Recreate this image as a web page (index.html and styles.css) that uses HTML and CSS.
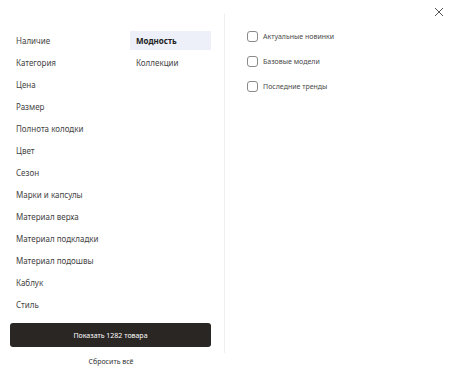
FILE: index.html
```html
<!DOCTYPE html>
<html lang="ru">

<head>
  <meta charset="UTF-8" />
  <meta name="viewport" content="width=device-width, initial-scale=1.0" />
  <title>Фильтры</title>
  <link rel="stylesheet" href="styles.css">
</head>

<body>
  <div class="filters">
    <!-- Close -->
    <button class="close" aria-label="Закрыть">
      <svg width="10" height="10" viewBox="0 0 10 10">
        <path d="M1 1L9 9M9 1L1 9" stroke="#555" stroke-width="1" fill="none" />
      </svg>
    </button>

    <div class="filters-body">
      <!-- Left: groups + subgroups -->
      <div class="filters-left">
        <div class="columns">
          <ul class="group-list">
            <li>Наличие</li>
            <li>Категория</li>
            <li>Цена</li>
            <li>Размер</li>
            <li>Полнота колодки</li>
            <li>Цвет</li>
            <li>Сезон</li>
            <li>Марки и капсулы</li>
            <li>Материал верха</li>
            <li>Материал подкладки</li>
            <li>Материал подошвы</li>
            <li>Каблук</li>
            <li>Стиль</li>
          </ul>
          <ul class="group-list sub">
            <li class="active">Модность</li>
            <li>Коллекции</li>
          </ul>
        </div>
        <button class="show-btn">Показать 1282 товара</button>
      </div>

      <!-- Right: options -->
      <div class="filters-right">
        <label class="option"><input type="checkbox"><span class="box"></span>Актуальные новинки</label>
        <label class="option"><input type="checkbox"><span class="box"></span>Базовые модели</label>
        <label class="option"><input type="checkbox"><span class="box"></span>Последние тренды</label>
      </div>
    </div>

    <div class="filters-footer">
      <a href="#" class="reset">Сбросить всё</a>
    </div>
  </div>
</body>

</html>
```

FILE: styles.css
```css
/* Reset */
* {
  margin: 0;
  padding: 0;
  box-sizing: border-box;
  font-family: 'Noto Sans', 'Open Sans', sans-serif;
}

body {
  background: #ffffff;
  color: #3a3a3a;
  width: 450px;
  height: 374px;
  overflow: hidden;
}

.filters {
  position: relative;
  padding-top: 14px;
}

/* Close button */
.close {
  position: absolute;
  top: 7px;
  right: 6px;
  width: 10px;
  height: 10px;
  border: none;
  background: none;
  display: flex;
  cursor: pointer;
}

.filters-body {
  display: flex;
}

/* Left panel */
.filters-left {
  width: 225px;
  padding: 17px 13px 6px 10px;
  border-right: 1px solid #f0f0f0;
}

.columns {
  display: flex;
  height: 292px;
}

.group-list {
  list-style: none;
  width: 120px;
  display: flex;
  flex-direction: column;
  gap: 3px;
}

.group-list.sub {
  width: 81px;
}

.group-list li {
  height: 19px;
  line-height: 20px;
  padding: 0 6px;
  font-size: 8px;
  color: #444;
  white-space: nowrap;
  cursor: pointer;
}

.group-list li.active {
  background-color: #edf0f9;
  font-weight: 700;
  color: #222;
}

.show-btn {
  display: block;
  width: 201px;
  height: 24px;
  border: none;
  border-radius: 3px;
  background-color: #2a2624;
  color: #ffffff;
  font-size: 7px;
  cursor: pointer;
}

/* Right panel */
.filters-right {
  padding: 17px 0 0 22px;
  display: flex;
  flex-direction: column;
  gap: 14px;
}

.option {
  display: flex;
  align-items: center;
  gap: 5px;
  height: 11px;
  font-size: 7px;
  color: #4a4a4a;
  cursor: pointer;
}

.option input {
  display: none;
}

.option .box {
  width: 11px;
  height: 11px;
  border: 1px solid #8a8a8a;
  border-radius: 3px;
}

/* Footer */
.filters-footer {
  width: 222px;
  text-align: center;
  padding-top: 4px;
  font-size: 7px;
  line-height: 10px;
}

.reset {
  color: #333;
  text-decoration: none;
}
```
